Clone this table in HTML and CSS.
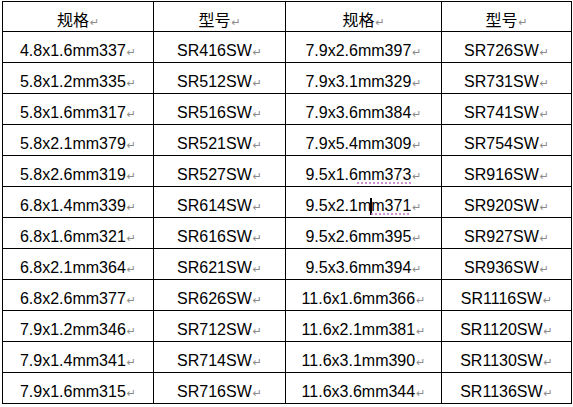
FILE: index.html
```html
<!DOCTYPE html>
<html lang="zh">
<head>
<meta charset="utf-8">
<title>规格 型号</title>
<link rel="stylesheet" href="styles.css">
</head>
<body>
<table class="spec">
  <colgroup>
    <col class="c1"><col class="c2"><col class="c3"><col class="c4">
  </colgroup>
  <thead>
    <tr class="head"><th>规格<span class="pm">↵</span></th><th>型号<span class="pm">↵</span></th><th>规格<span class="pm">↵</span></th><th>型号<span class="pm">↵</span></th></tr>
  </thead>
  <tbody>
    <tr><td>4.8x1.6mm337<span class="pm">↵</span></td><td>SR416SW<span class="pm">↵</span></td><td>7.9x2.6mm397<span class="pm">↵</span></td><td>SR726SW<span class="pm">↵</span></td></tr>
    <tr><td>5.8x1.2mm335<span class="pm">↵</span></td><td>SR512SW<span class="pm">↵</span></td><td>7.9x3.1mm329<span class="pm">↵</span></td><td>SR731SW<span class="pm">↵</span></td></tr>
    <tr><td>5.8x1.6mm317<span class="pm">↵</span></td><td>SR516SW<span class="pm">↵</span></td><td>7.9x3.6mm384<span class="pm">↵</span></td><td>SR741SW<span class="pm">↵</span></td></tr>
    <tr><td>5.8x2.1mm379<span class="pm">↵</span></td><td>SR521SW<span class="pm">↵</span></td><td>7.9x5.4mm309<span class="pm">↵</span></td><td>SR754SW<span class="pm">↵</span></td></tr>
    <tr><td>5.8x2.6mm319<span class="pm">↵</span></td><td>SR527SW<span class="pm">↵</span></td><td>9.5x1.6<span class="sp">mm373</span><span class="pm">↵</span></td><td>SR916SW<span class="pm">↵</span></td></tr>
    <tr><td>6.8x1.4mm339<span class="pm">↵</span></td><td>SR614SW<span class="pm">↵</span></td><td>9.5x2.1m<span class="caret"></span><span class="sp">m371</span><span class="pm">↵</span></td><td>SR920SW<span class="pm">↵</span></td></tr>
    <tr><td>6.8x1.6mm321<span class="pm">↵</span></td><td>SR616SW<span class="pm">↵</span></td><td>9.5x2.6mm395<span class="pm">↵</span></td><td>SR927SW<span class="pm">↵</span></td></tr>
    <tr><td>6.8x2.1mm364<span class="pm">↵</span></td><td>SR621SW<span class="pm">↵</span></td><td>9.5x3.6mm394<span class="pm">↵</span></td><td>SR936SW<span class="pm">↵</span></td></tr>
    <tr><td>6.8x2.6mm377<span class="pm">↵</span></td><td>SR626SW<span class="pm">↵</span></td><td>11.6x1.6mm366<span class="pm">↵</span></td><td>SR1116SW<span class="pm">↵</span></td></tr>
    <tr><td>7.9x1.2mm346<span class="pm">↵</span></td><td>SR712SW<span class="pm">↵</span></td><td>11.6x2.1mm381<span class="pm">↵</span></td><td>SR1120SW<span class="pm">↵</span></td></tr>
    <tr><td>7.9x1.4mm341<span class="pm">↵</span></td><td>SR714SW<span class="pm">↵</span></td><td>11.6x3.1mm390<span class="pm">↵</span></td><td>SR1130SW<span class="pm">↵</span></td></tr>
    <tr><td>7.9x1.6mm315<span class="pm">↵</span></td><td>SR716SW<span class="pm">↵</span></td><td>11.6x3.6mm344<span class="pm">↵</span></td><td>SR1136SW<span class="pm">↵</span></td></tr>
  </tbody>
</table>
</body>
</html>
```
FILE: styles.css
```css
html, body {
  margin: 0;
  padding: 0;
  background: #ffffff;
}
body {
  padding: 1px 0 0 2px;
}
.spec {
  border-collapse: collapse;
  table-layout: fixed;
  width: 569px;
  font-family: "Liberation Sans", Arial, "Noto Sans CJK SC", sans-serif;
  font-size: 16px;
  color: #000;
}
.c1 { width: 151px; }
.c2 { width: 132px; }
.c3 { width: 156px; }
.c4 { width: 130px; }
.spec th,
.spec td {
  border: 1px solid #000;
  padding: 10px 0 0 0;
  height: 20px;
  text-align: center;
  vertical-align: top;
  line-height: 18px;
  white-space: nowrap;
  font-weight: normal;
}
.spec th {
  font-family: "Noto Sans CJK SC", sans-serif;
  font-size: 16px;
  padding-top: 8px;
  height: 21px;
}
.pm {
  font-family: "DejaVu Sans", sans-serif;
  font-size: 11px;
  line-height: 1;
  color: #8a8a8a;
  margin-left: 1px;
}
.sp {
  text-decoration: underline dotted #c07ac8;
  text-underline-offset: 3px;
}
.caret {
  display: inline-block;
  width: 2px;
  height: 17px;
  background: #000;
  vertical-align: -4px;
  margin: 0 -1px;
}
```
